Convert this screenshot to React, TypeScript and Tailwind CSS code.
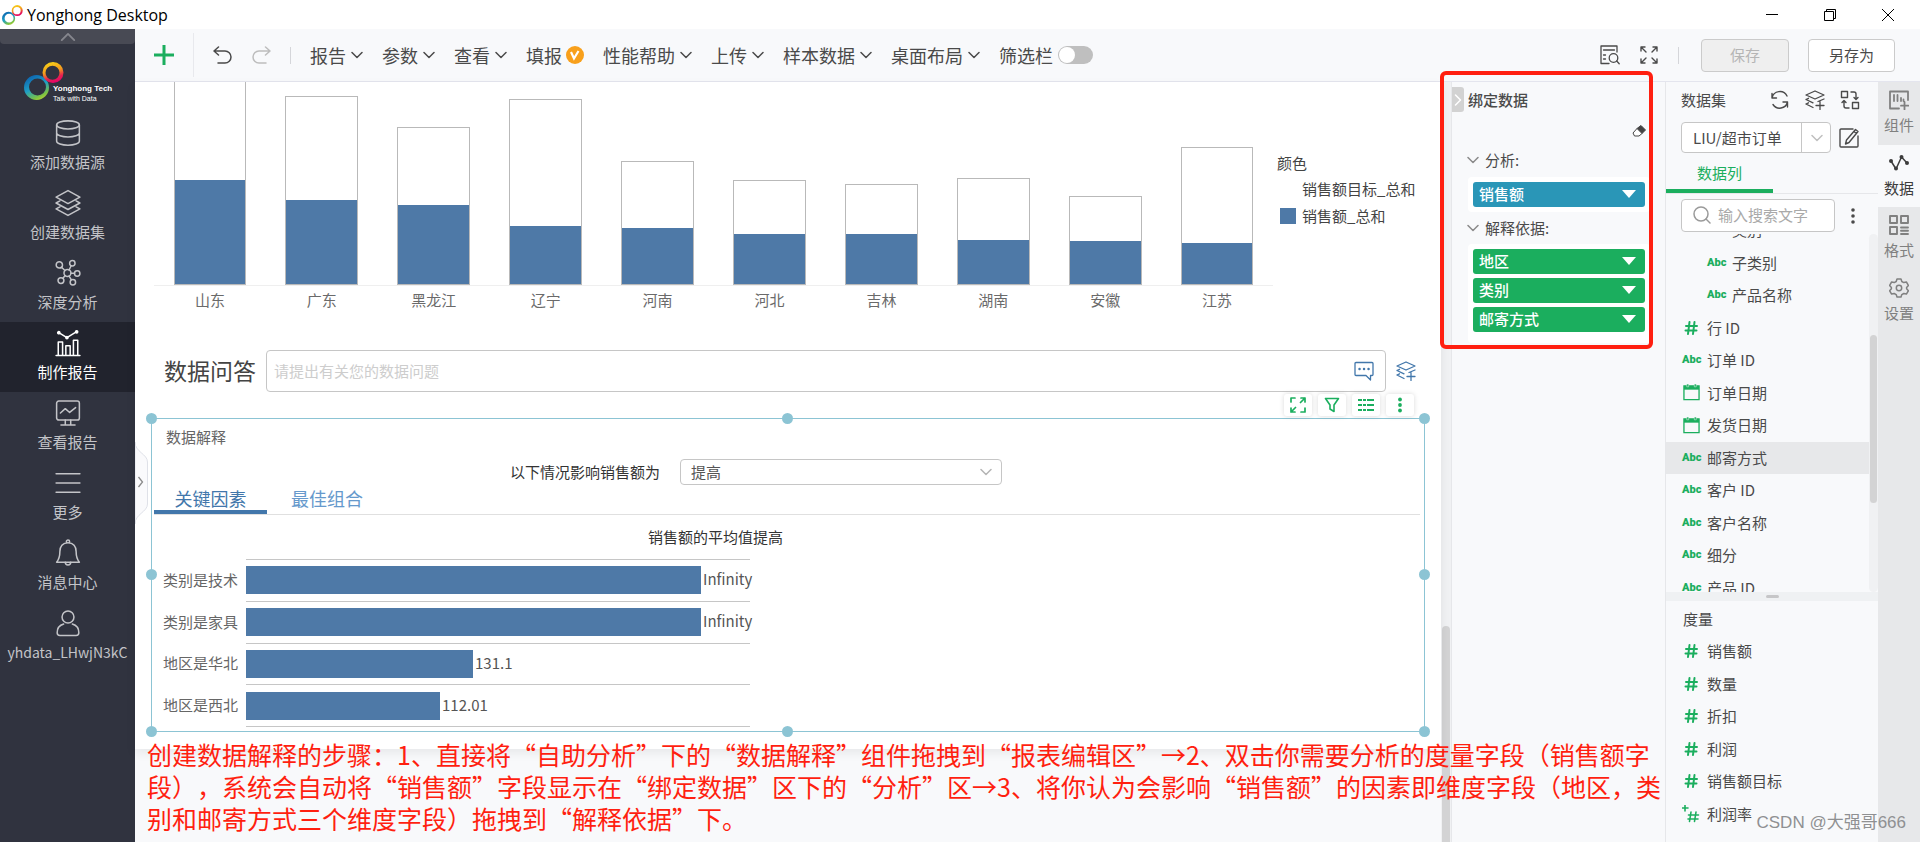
import React from 'react';

const stroke = {
  fill: 'none',
  stroke: 'currentColor',
  strokeWidth: 1.5,
  strokeLinecap: 'round' as const,
  strokeLinejoin: 'round' as const,
};

const Logo = ({ className, id }: { className: string; id: string }) => (
  <svg viewBox="0 0 40 38" className={className} aria-hidden="true">
    <defs>
      <linearGradient id={`${id}-warm`} x1="0.3" y1="0" x2="0.6" y2="1">
        <stop offset="0" stopColor="#f7d417" />
        <stop offset="0.45" stopColor="#f39a1e" />
        <stop offset="0.75" stopColor="#e6204f" />
        <stop offset="1" stopColor="#e5006e" />
      </linearGradient>
      <linearGradient id={`${id}-cool`} x1="0.2" y1="0" x2="0.7" y2="1">
        <stop offset="0" stopColor="#0b5fae" />
        <stop offset="0.5" stopColor="#1f9fc4" />
        <stop offset="0.85" stopColor="#7cc243" />
        <stop offset="1" stopColor="#b5d334" />
      </linearGradient>
    </defs>
    <path
      fill={`url(#${id}-cool)`}
      fillRule="evenodd"
      d="M12.500 13a12.500 12.500 0 1 0 0 25a12.500 12.500 0 0 0 0-25zM13.500 16.500a8.500 8.500 0 1 1 0 17a8.500 8.500 0 0 1 0-17z"
    />
    <path
      fill={`url(#${id}-warm)`}
      fillRule="evenodd"
      d="M29 0a10.500 10.500 0 1 0 0 21a10.500 10.500 0 0 0 0-21zM28.500 3.800a7 7 0 1 1 0 14a7 7 0 0 1 0-14z"
    />
  </svg>
);

const Chevron = ({ className }: { className: string }) => (
  <svg viewBox="0 0 12 8" className={className} {...stroke} aria-hidden="true">
    <path d="M1 1.500l5 5 5-5" />
  </svg>
);

const LayersPlus = ({ className }: { className: string }) => (
  <svg viewBox="0 0 20 20" className={className} {...stroke} strokeWidth={1.3} aria-hidden="true">
    <path d="M10 1L1 5l9 4 9-4zM19 9L13 11.500M1 9.500l7 3.300M1 9.500l2.500-1.200M1 14l7 3.500M1 14l2.500-1.200M15 11.500v8M11 15.500h8" />
  </svg>
);

const navItems = [
  {
    label: '添加数据源',
    icon: (
      <>
        <ellipse cx="12" cy="4.500" rx="10.500" ry="3.700" />
        <path d="M1.500 4.500v15c0 2 4.700 3.700 10.500 3.700s10.500-1.700 10.500-3.700v-15M1.500 12c0 2 4.700 3.700 10.500 3.700s10.500-1.700 10.500-3.700" />
      </>
    ),
  },
  {
    label: '创建数据集',
    icon: (
      <path d="M12 0.500L23 6.500 12 12.500 1 6.500zM4.500 10L1 12l11 6 11-6-3.500-2M4.500 15.500L1 17.500l11 6 11-6-3.500-2" />
    ),
  },
  {
    label: '深度分析',
    icon: (
      <>
        <circle cx="11.500" cy="12" r="3.200" />
        <circle cx="4" cy="4.500" r="2.900" />
        <circle cx="16" cy="3" r="2.500" />
        <circle cx="20.500" cy="12.500" r="2.500" />
        <circle cx="5.500" cy="19" r="2.700" />
        <circle cx="16.500" cy="20.500" r="2.500" />
        <path d="M6 6.700l3.200 3M14.900 5.300l-1.900 3.900M14.700 12.200h3.300M9.400 14.400l-2.100 2.500M13 14.900l2 3.300" />
      </>
    ),
  },
  {
    label: '制作报告',
    icon: (
      <>
        <path d="M1 23.500h22M3 23.500V11h4v12.500M10 23.500V14.500h4v9M17 23.500V9.500h4v14" />
        <path d="M3.500 2.500L11 7l9-5.500" />
        <circle cx="3.500" cy="2.500" r="1" fill="currentColor" />
        <circle cx="11" cy="7" r="1" fill="currentColor" />
        <circle cx="20" cy="1.700" r="1" fill="currentColor" />
      </>
    ),
  },
  {
    label: '查看报告',
    icon: (
      <>
        <rect x="1.500" y="1" width="21" height="17.500" rx="2" />
        <path d="M5 12l4.500-4 4 3.500L19 7M9.500 18.500v4M14.500 18.500v4M5.500 23h13" />
      </>
    ),
  },
  { label: '更多', icon: <path d="M1 3.500h22M1 12h22M1 20.500h22" /> },
  {
    label: '消息中心',
    icon: (
      <>
        <path d="M12 2.500c-5 0-7.500 3.500-7.500 8 0 5.500-1 7.500-3 10h21c-2-2.500-3-4.500-3-10 0-4.500-2.500-8-7.500-8zM10.500 2.500v-1a1.500 1.500 0 0 1 3 0v1" />
        <path d="M9.500 20.500a2.500 2.500 0 0 0 5 0" />
      </>
    ),
  },
  {
    label: 'yhdata_LHwjN3kC',
    small: true,
    icon: (
      <>
        <circle cx="12" cy="6.500" r="5.500" />
        <path d="M8 13c-3.500 1-6 4-6 8 0 1.500 1 2.500 2.500 2.500h15c1.500 0 2.500-1 2.500-2.500 0-4-2.500-7-6-8" />
      </>
    ),
  },
];

const menus = ['报告', '参数', '查看', '填报', '性能帮助', '上传', '样本数据', '桌面布局'];

// total = target bar height, value = filled part
const provinces = [
  { name: '山东', total: 230, value: 105 },
  { name: '广东', total: 189, value: 85 },
  { name: '黑龙江', total: 158, value: 80 },
  { name: '辽宁', total: 186, value: 59 },
  { name: '河南', total: 124, value: 57 },
  { name: '河北', total: 105, value: 51 },
  { name: '吉林', total: 101, value: 51 },
  { name: '湖南', total: 107, value: 45 },
  { name: '安徽', total: 89, value: 44 },
  { name: '江苏', total: 138, value: 42 },
];

const factors = [
  { name: '类别是技术', value: 'Infinity', width: 455 },
  { name: '类别是家具', value: 'Infinity', width: 455 },
  { name: '地区是华北', value: '131.1', width: 227 },
  { name: '地区是西北', value: '112.01', width: 194 },
];

const columns = [
  { name: '类别', kind: 'abc', nested: true },
  { name: '子类别', kind: 'abc', nested: true },
  { name: '产品名称', kind: 'abc', nested: true },
  { name: '行 ID', kind: 'num' },
  { name: '订单 ID', kind: 'abc' },
  { name: '订单日期', kind: 'date' },
  { name: '发货日期', kind: 'date' },
  { name: '邮寄方式', kind: 'abc', active: true },
  { name: '客户 ID', kind: 'abc' },
  { name: '客户名称', kind: 'abc' },
  { name: '细分', kind: 'abc' },
  { name: '产品 ID', kind: 'abc' },
];

const measures = [
  { name: '销售额', kind: 'num' },
  { name: '数量', kind: 'num' },
  { name: '折扣', kind: 'num' },
  { name: '利润', kind: 'num' },
  { name: '销售额目标', kind: 'num' },
  { name: '利润率', kind: 'calc' },
];

const sideTabs = [
  {
    label: '组件',
    icon: (
      <path d="M19 10V1.500H1v17h9M5 5v6M8.500 5v6M12 8v3M14.500 9.500v1.500M15.500 12v7.500M12 15.700h7.500" strokeWidth="1.800" />
    ),
  },
  {
    label: '数据',
    active: true,
    icon: (
      <>
        <path d="M2 8l5 8L12.500 4 18 10" strokeWidth="1.500" />
        <g fill="currentColor" stroke="none">
          <circle cx="2" cy="8" r="2" />
          <circle cx="7" cy="15.500" r="2" />
          <circle cx="12.500" cy="4" r="2" />
          <circle cx="18" cy="10" r="2" />
        </g>
      </>
    ),
  },
  {
    label: '格式',
    icon: (
      <path d="M1 1h7v7H1zM12 1h7v7h-7zM1 12h7v7H1zM12 12.500h7M12 15.800h7M12 19h7" strokeWidth="1.900" />
    ),
  },
  {
    label: '设置',
    icon: (
      <>
        <path d="M8 1h4l.8 2.500 2 1.100 2.600-.6 2 3.400-1.800 2v1.300l1.800 2-2 3.400-2.600-.6-2 1.100L12 19H8l-.8-2.400-2-1.100-2.600.6-2-3.400 1.800-2V9.400l-1.800-2 2-3.400 2.600.6 2-1.100z" />
        <circle cx="10" cy="10" r="2.700" />
      </>
    ),
  },
];

const FieldIcon = ({ kind }: { kind: string }) => {
  if (kind === 'date') {
    return (
      <svg viewBox="0 0 18 18" className="ml-px h-[17px] w-[17px]" aria-hidden="true">
        <path d="M1 2h16v14.500H1z" fill="none" stroke="#1bae5e" strokeWidth="1.400" />
        <path d="M1 2h16v4H1z" fill="#1bae5e" />
        <path d="M4 0h2v3H4zM12 0h2v3h-2z" fill="#1bae5e" stroke="#f8f9fb" strokeWidth="0.500" />
      </svg>
    );
  }
  if (kind === 'abc') {
    return <span className="font-[Roboto] text-[11px] leading-4 font-black text-[#1bae5e]">Abc</span>;
  }
  return (
    <svg viewBox="0 0 18 18" className="h-[18px] w-[18px] text-[#1bae5e]" {...stroke} strokeWidth={2} aria-hidden="true">
      {kind === 'calc' ? (
        <path d="M3 0v6M0 3h6M9 7l-1.500 9.500M14 7l-1.500 9.500M6.500 10h10M6 14h10" strokeWidth="1.600" />
      ) : (
        <path d="M7.500 3L6 15M12.500 3L11 15M4 7h11M3.500 11.500h11" />
      )}
    </svg>
  );
};

const FieldList = ({ fields }: { fields: { name: string; kind: string; nested?: boolean; active?: boolean }[] }) => (
  <>
    {fields.map((f) => (
      <li
        key={f.name}
        className={`flex flex-1 items-center ${f.nested ? 'pl-[41px]' : 'pl-4'} ${f.active ? 'bg-[#e7e8ea]' : ''}`}
      >
        <span className="flex w-[25px] shrink-0 items-center">
          <FieldIcon kind={f.kind} />
        </span>
        {f.name}
      </li>
    ))}
  </>
);

const Pill = ({ label, blue }: { label: string; blue?: boolean }) => (
  <button
    className={`flex h-[25px] w-full items-center justify-between rounded-[3px] pr-[9px] pb-px pl-1.5 text-[15px] leading-[22px] font-medium text-white ${
      blue ? 'bg-[#2a96b7]' : 'bg-[#1bae5e]'
    }`}
  >
    {label}
    <svg viewBox="0 0 14 8" className="h-2 w-3.5" aria-hidden="true">
      <path d="M0 0h14L7 8z" fill="#fff" />
    </svg>
  </button>
);

const Handle = ({ className }: { className: string }) => (
  <span className={`absolute h-[11px] w-[11px] rounded-full bg-[#8cc4d4] ${className}`} />
);

const TitleBar = () => (
  <header className="flex h-[29px] shrink-0 items-center bg-white pr-[26px] pl-0.5 text-black">
    <Logo id="title" className="h-5 w-[21px]" />
    <h1 className="ml-1 font-['Open_Sans','Noto_Sans_CJK_SC',sans-serif] text-base leading-6">Yonghong Desktop</h1>
    <div className="ml-auto flex items-center gap-[46px]">
      <button aria-label="最小化">
        <svg viewBox="0 0 12 12" className="h-3 w-3" stroke="#000" fill="none">
          <path d="M0 5.500h12" />
        </svg>
      </button>
      <button aria-label="还原">
        <svg viewBox="0 0 12 12" className="h-3 w-3" stroke="#000" fill="none">
          <path d="M0.500 2.500h9v9h-9zM2.500 2.500v-2h9v9h-2" />
        </svg>
      </button>
      <button aria-label="关闭">
        <svg viewBox="0 0 12 12" className="h-3 w-3" stroke="#000" fill="none">
          <path d="M0 0l12 12M12 0L0 12" />
        </svg>
      </button>
    </div>
  </header>
);

const Sidebar = () => (
  <aside className="flex w-[135px] shrink-0 flex-col bg-[#30333f]">
    <button className="flex h-[15px] items-center justify-center rounded-b-sm bg-[#484a54] text-[#85868d]" aria-label="收起">
      <Chevron className="h-2.5 w-4 rotate-180" />
    </button>
    <div className="flex h-[68px] items-start pt-[18px] pl-6">
      <Logo id="brand" className="h-[38px] w-10 shrink-0" />
      <div className="-ml-[11px] pt-[21px] font-['Liberation_Sans',sans-serif] whitespace-nowrap text-white">
        <p className="text-[8px] leading-3 font-bold">Yonghong Tech</p>
        <p className="text-[7px] leading-2">Talk with Data</p>
      </div>
    </div>
    <nav>
      {navItems.map((item) => (
        <a
          key={item.label}
          href="#"
          className={`flex h-[70px] flex-col items-center pt-2 ${item.small ? 'text-sm' : 'text-[15px]'} ${
            item.label === '制作报告' ? 'bg-[#21232d] text-white' : 'text-[#c3c4c8]'
          }`}
        >
          <svg viewBox="0 0 24 24" className="h-[26px] w-[26px] overflow-visible" {...stroke} strokeWidth={1.4} aria-hidden="true">
            {item.icon}
          </svg>
          <span className="mt-1 leading-6">{item.label}</span>
        </a>
      ))}
    </nav>
  </aside>
);

const Toolbar = () => (
  <div className="flex h-[53px] shrink-0 items-center border-b border-[#e4e5ee] bg-[#f8f9fb] text-lg leading-6 text-[#4a4a4a]">
    <button className="ml-[19px] text-[#1bae5e]" aria-label="新建">
      <svg viewBox="0 0 20 20" className="h-5 w-5" stroke="currentColor" strokeWidth="3">
        <path d="M10 0v20M0 10h20" />
      </svg>
    </button>
    <span className="mr-[19px] ml-[19px] h-11 w-px bg-[#e8e9ed]" />
    <button aria-label="撤销">
      <svg viewBox="0 0 20 18" className="h-[18px] w-5" {...stroke} strokeWidth={1.5}>
        <path d="M5.500 1L1 5l4.500 4M1.500 5H12a6 6 0 0 1 0 12H5" />
      </svg>
    </button>
    <button className="ml-[18px] text-[#bdbdbd]" aria-label="重做">
      <svg viewBox="0 0 20 18" className="h-[18px] w-5" {...stroke} strokeWidth={1.5}>
        <path d="M14.500 1L19 5l-4.500 4M18.500 5H8a6 6 0 0 0 0 12h7" />
      </svg>
    </button>
    <span className="mr-[19px] ml-[19px] h-[17px] w-px bg-[#d5d6da]" />
    {menus.map((m) => (
      <button key={m} className="mr-[19px] flex shrink-0 items-center gap-[5px]">
        {m}
        {m === '填报' ? (
          <svg viewBox="0 0 18 18" className="-ml-px h-[18px] w-[18px]" aria-hidden="true">
            <circle cx="9" cy="9" r="9" fill="#f8a01c" />
            <path d="M5 6l3 6.500L12.500 5" fill="none" stroke="#fff" strokeWidth="2.200" />
          </svg>
        ) : (
          <Chevron className="h-2 w-3" />
        )}
      </button>
    ))}
    <label className="flex shrink-0 items-center gap-[5px]">
      筛选栏
      <input
        type="checkbox"
        className="h-[18px] w-[35px] appearance-none rounded-full bg-[#bfbfbf] p-px before:block before:h-4 before:w-4 before:rounded-full before:bg-white before:content-['']"
      />
    </label>
    <div className="ml-auto flex shrink-0 items-center pr-[25px] text-[15px]">
      <button aria-label="查找">
        <svg viewBox="0 0 20 20" className="h-5 w-5" {...stroke} strokeWidth={1.3}>
          <path d="M17 7V1H1v17.500h8M3.500 5h11M3.500 10h2M3.500 14h2" />
          <circle cx="13.500" cy="13" r="4.300" />
          <path d="M16.700 16l2.500 2.800" />
        </svg>
      </button>
      <button className="ml-5" aria-label="全屏">
        <svg viewBox="0 0 18 18" className="h-[18px] w-[18px]" {...stroke} strokeWidth={1.4}>
          <path d="M1 5V1h4M1 1l5 5M13 1h4v4M17 1l-5 5M1 13v4h4M1 17l5-5M13 17h4v-4M17 17l-5-5" />
        </svg>
      </button>
      <span className="mr-[22px] ml-5 h-[17px] w-px bg-[#d5d6da]" />
      <button disabled className="h-[33px] w-[88px] rounded-sm border border-[#cbcbcb] bg-[#efefef] text-[#b5b5b5]">
        保存
      </button>
      <button className="ml-[19px] h-[33px] w-[87px] rounded-sm border border-[#cbcbcb] bg-white">另存为</button>
    </div>
  </div>
);

const SalesChart = () => (
  <div className="flex pl-[19px]">
    <div className="flex-1">
      <div className="flex h-[204px] items-end overflow-hidden border-b border-[#efefef]">
        {provinces.map((p) => (
          <div key={p.name} className="flex flex-1 items-end justify-center">
            <div className="flex w-[65%] shrink-0 items-end border border-[#b9b9b9] bg-white" style={{ height: p.total }}>
              <div className="w-full bg-[#4e79a7]" style={{ height: p.value - 1 }} />
            </div>
          </div>
        ))}
      </div>
      <div className="flex pt-[3px]">
        {provinces.map((p) => (
          <span key={p.name} className="flex-1 text-center leading-[22px] text-[#6a6a6a]">
            {p.name}
          </span>
        ))}
      </div>
    </div>
    <div className="w-[168px] shrink-0 pt-[70px] pl-1 leading-[22px] text-[#444]">
      <p>颜色</p>
      <p className="mt-1 pl-[25px]">销售额目标_总和</p>
      <p className="mt-[5px] flex items-center gap-1.5 pl-[3px]">
        <span className="h-4 w-4 bg-[#4e79a7]" />
        销售额_总和
      </p>
    </div>
  </div>
);

const floatButton = 'flex h-[22px] w-7 items-center justify-center rounded-[3px] bg-white shadow-[0_0_5px_rgba(0,0,0,0.15)]';

const ExplainPanel = () => (
  <section className="relative mx-4 mt-[26px] h-[314px] border border-[#8cc4d4] bg-white">
    <div className="absolute -top-[25px] right-2.5 flex gap-1.5 text-[#1bae5e]">
      <button className={floatButton} aria-label="放大">
        <svg viewBox="0 0 16 16" className="h-4 w-4" {...stroke} strokeWidth={1.7}>
          <path d="M1 5V1h4M11 1h4v4M15 1l-4.500 4.500M1 11v4h4M1 15l4.500-4.500M11 15h4v-4" />
        </svg>
      </button>
      <button className={floatButton} aria-label="筛选">
        <svg viewBox="0 0 16 16" className="h-4 w-4" {...stroke} strokeWidth={1.6}>
          <path d="M1.500 1.500h13L10 8v6.500L6 12V8z" />
        </svg>
      </button>
      <button className={floatButton} aria-label="列表">
        <svg viewBox="0 0 16 16" className="h-4 w-4" stroke="currentColor" strokeWidth="1.800">
          <path d="M0 3h4M5 3h3M9 3h7M0 8h4M5 8h3M9 8h7M0 13h4M5 13h3M9 13h7" />
        </svg>
      </button>
      <button className={floatButton} aria-label="更多">
        <svg viewBox="0 0 16 16" className="h-4 w-4" fill="currentColor">
          <circle cx="8" cy="2.500" r="1.900" />
          <circle cx="8" cy="8" r="1.900" />
          <circle cx="8" cy="13.500" r="1.900" />
        </svg>
      </button>
    </div>

    <h2 className="pt-[7px] pl-3.5 leading-[22px] text-[#666]">数据解释</h2>

    <div className="mt-[11px] flex items-center pl-[358px]">
      <label htmlFor="effect" className="leading-[22px] text-[#333]">
        以下情况影响销售额为
      </label>
      <div className="relative ml-5 w-[322px]">
        <select
          id="effect"
          className="h-[26px] w-full appearance-none rounded-sm border border-[#c6c6c6] bg-white pl-2.5 leading-[22px] text-[#555]"
        >
          <option>提高</option>
        </select>
        <Chevron className="pointer-events-none absolute top-[9px] right-[10px] h-2 w-3 text-[#b5b5b5]" />
      </div>
    </div>

    <div className="mr-1 ml-0.5 flex h-[30px] border-b border-[#e0e0e0] text-lg leading-6">
      <button className="w-[113px] border-b-4 border-[#4277ab] text-[#4277ab]">关键因素</button>
      <button className="ml-6 pb-1 text-[#6699cc]">最佳组合</button>
    </div>

    <h3 className="mt-[11px] pl-[496px] leading-[22px] text-[#333]">销售额的平均值提高</h3>

    <div className="mt-[11px] flex h-[168px] flex-col">
      {factors.map((f) => (
        <div key={f.name} className="flex flex-1 items-center pl-[11px]">
          <span className="w-[76px] leading-[22px] text-[#666]">{f.name}</span>
          <div className="ml-[7px] flex w-[504px] items-center self-stretch border-t border-[#c6c6c6]">
            <div className="h-[28px] shrink-0 bg-[#4e79a7]" style={{ width: f.width }} />
            <span className="ml-0.5 pb-0.5 leading-[22px] text-[#555]">{f.value}</span>
          </div>
        </div>
      ))}
      <div className="ml-[94px] h-px w-[504px] shrink-0 bg-[#c6c6c6]" />
    </div>

    <Handle className="-top-1.5 -left-1.5" />
    <Handle className="-top-1.5 left-1/2 -ml-1.5" />
    <Handle className="-top-1.5 -right-1.5" />
    <Handle className="top-1/2 -left-1.5 -mt-1.5" />
    <Handle className="top-1/2 -right-1.5 -mt-1.5" />
    <Handle className="-bottom-1.5 -left-1.5" />
    <Handle className="-bottom-1.5 left-1/2 -ml-1.5" />
    <Handle className="-right-1.5 -bottom-1.5" />
  </section>
);

const Canvas = () => (
  <main className="relative min-w-0 flex-1 bg-[#f8f9fb]">
    <div className="bg-white pb-[17px] shadow-[0_4px_10px_rgba(0,0,0,0.07)]">
      <SalesChart />
      <div className="mt-[39px] flex items-center gap-[10px] pr-[25px] pl-[29px]">
        <label htmlFor="question" className="shrink-0 pb-0.5 text-[23px] leading-8 text-[#444]">
          数据问答
        </label>
        <div className="flex h-[42px] flex-1 items-center rounded-sm border border-[#c6c6c6] pr-[11px] pl-[7px]">
          <input
            id="question"
            placeholder="请提出有关您的数据问题"
            className="flex-1 leading-[22px] outline-none placeholder:text-[#cdcdcd]"
          />
          <svg viewBox="0 0 20 20" className="h-5 w-5 text-[#4277ab]" {...stroke} strokeWidth={1.3} aria-hidden="true">
            <path d="M2 1.500h16a1 1 0 0 1 1 1v11a1 1 0 0 1-1 1h-1.500V19L12 14.500H2a1 1 0 0 1-1-1v-11a1 1 0 0 1 1-1z" />
            <path d="M5.500 8h.1M10 8h.1M14.500 8h.1" strokeWidth="2.400" />
          </svg>
        </div>
        <button className="text-[#4277ab]" aria-label="选择数据集">
          <LayersPlus className="h-5 w-5" />
        </button>
      </div>
      <ExplainPanel />
    </div>

    {/* drawer handle on the left edge */}
    <button className="absolute top-[360px] left-0" aria-label="展开">
      <svg viewBox="0 0 13 82" className="h-[82px] w-[13px]" fill="none">
        <path d="M0 0c0 10 12.500 12 12.500 20v42C12.500 70 0 72 0 82z" fill="#fafafc" stroke="#dfe1e8" />
        <path d="M3.500 35l4 5-4 5" stroke="#8a8a8a" strokeWidth="1.300" />
      </svg>
    </button>
  </main>
);

const BindPanel = () => (
  <aside className="relative w-[214px] shrink-0 border-l border-[#e6e7ea] bg-[#f8f9fb] pr-[15px]">
    <div className="flex items-start pt-[5px]">
      <button className="flex h-[25px] w-3 items-center justify-center rounded-r-[3px] bg-[#d2d2d2] text-white" aria-label="收起">
        <Chevron className="h-2 w-3 shrink-0 -rotate-90" />
      </button>
      <h2 className="ml-1 pt-0.5 leading-[22px] font-medium">绑定数据</h2>
    </div>
    <div className="flex h-[37px] items-center justify-end pr-1">
      <svg viewBox="0 0 14 12" className="h-3 w-3.5" aria-hidden="true">
        <path d="M9 0.500l4.500 4.500-3.500 3.500L5 3.500z" fill="#444" stroke="#444" />
        <path d="M5 3.500L1 8l1.500 3h4.500l3-2.500z" fill="#fff" stroke="#444" />
      </svg>
    </div>
    <h3 className="flex items-center gap-1.5 pl-[15px] leading-[22px]">
      <Chevron className="h-2 w-3 text-[#8a8a8a]" />
      分析:
    </h3>
    <div className="mt-1.5 ml-4 rounded-sm bg-white px-[5px] py-[5px]">
      <Pill label="销售额" blue />
    </div>
    <h3 className="mt-[5px] flex items-center gap-1.5 pl-[15px] leading-[22px]">
      <Chevron className="h-2 w-3 text-[#8a8a8a]" />
      解释依据:
    </h3>
    <div className="mt-[5px] ml-4 flex flex-col gap-1 rounded-sm bg-white px-[5px] pt-[5px] pb-[11px]">
      <Pill label="地区" />
      <Pill label="类别" />
      <Pill label="邮寄方式" />
    </div>

    {/* highlight frame */}
    <div className="pointer-events-none absolute -top-[11px] -left-3 z-10 h-[278px] w-[213px] rounded-md border-4 border-[#ff1f10]" />
  </aside>
);

const DataPanel = () => (
  <aside className="flex w-[213px] shrink-0 flex-col border-l border-[#e6e7ea] bg-[#f8f9fb]">
    <div className="flex items-center pt-[7px] pr-[18px] pl-[15px]">
      <h2 className="leading-[22px]">数据集</h2>
      <div className="ml-auto flex gap-[15px]">
        <button aria-label="刷新">
          <svg viewBox="0 0 20 20" className="h-5 w-5" {...stroke} strokeWidth={1.4}>
            <path d="M2 8a8 8 0 0 1 15-2M17.500 12a8 8 0 0 1-14.500 2.500M2 3.500V8h4.500M17.500 17v-5H13" />
          </svg>
        </button>
        <button aria-label="新建数据集">
          <LayersPlus className="h-5 w-5" />
        </button>
        <button aria-label="替换">
          <svg viewBox="0 0 20 20" className="h-5 w-5" {...stroke} strokeWidth={1.4}>
            <path d="M1.500 1.500h6v6h-6zM12.500 12.500h6v6h-6zM11 2h3a2 2 0 0 1 2 2v5M14 7.500l2 2 2-2M9 18H6a2 2 0 0 1-2-2v-5M2 12.500l2-2 2 2" />
          </svg>
        </button>
      </div>
    </div>
    <div className="flex items-center gap-2 pt-[11px] pl-[15px]">
      <div className="relative w-[150px]">
        <select
          aria-label="数据集"
          className="h-[31px] w-full appearance-none rounded-sm border border-[#c6c6c6] bg-white pl-[11px] leading-[22px]"
        >
          <option>LIU/超市订单</option>
        </select>
        <span className="pointer-events-none absolute top-0 right-0 flex h-[31px] w-[30px] items-center justify-center border-l border-[#c6c6c6] text-[#c0c0c0]">
          <Chevron className="h-2 w-3" />
        </span>
      </div>
      <button aria-label="编辑">
        <svg viewBox="0 0 20 20" className="h-5 w-5" {...stroke} strokeWidth={1.4}>
          <path d="M14 1H2a1 1 0 0 0-1 1v16a1 1 0 0 0 1 1h16a1 1 0 0 0 1-1V8M16.500 1.500l2.500 2-9 11-3.500 1.500 1-4zM15 3.500l2.300 2" />
        </svg>
      </button>
    </div>
    <div className="mt-[7px] flex h-[34px] border-b border-[#e6e7ea]">
      <button className="w-[107px] border-b-4 border-[#1bae5e] pb-1 leading-[22px] text-[#1bae5e]">数据列</button>
    </div>
    <div className="flex items-center pt-[5px] pl-[15px]">
      <div className="flex h-[33px] w-[154px] items-center gap-[7px] rounded-sm border border-[#c6c6c6] bg-white pb-0.5 pl-[11px]">
        <svg viewBox="0 0 18 18" className="h-[18px] w-[18px] shrink-0 text-[#9a9a9a]" {...stroke} aria-hidden="true">
          <circle cx="8" cy="8" r="7" />
          <path d="M13 13l4 4" />
        </svg>
        <input
          aria-label="搜索"
          placeholder="输入搜索文字"
          className="w-full min-w-0 leading-[22px] outline-none placeholder:text-[#a9a9a9]"
        />
      </div>
      <button className="ml-4" aria-label="更多">
        <svg viewBox="0 0 4 16" className="h-4 w-1" fill="currentColor">
          <circle cx="2" cy="2" r="1.800" />
          <circle cx="2" cy="8" r="1.800" />
          <circle cx="2" cy="14" r="1.800" />
        </svg>
      </button>
    </div>
    <div className="mt-0.5 flex h-[358px] shrink-0 overflow-hidden leading-[22px]">
      <ul className="-mt-5 flex h-[390px] flex-1 flex-col">
        <FieldList fields={columns} />
      </ul>
      <div className="w-[9px] rounded-full bg-[#f0f1f3] px-px pt-[101px]">
        <div className="h-[168px] rounded-full bg-[#d3d3d4]" />
      </div>
    </div>
    <div className="flex h-[9px] shrink-0 items-center justify-center bg-[#eff1f3]">
      <span className="h-[3px] w-[13px] rounded-sm bg-[#c6c6c8]" />
    </div>
    <h3 className="mt-[7px] pl-[17px] leading-[22px]">度量</h3>
    <ul className="mt-[5px] flex h-[195px] flex-col leading-[22px]">
      <FieldList fields={measures} />
    </ul>
  </aside>
);

const SideTabs = () => (
  <nav className="w-[42px] shrink-0 bg-[#e7e8ea]">
    <div className="flex h-[250px] flex-col">
      {sideTabs.map((t) => (
        <a
          key={t.label}
          href="#"
          className={`flex flex-1 flex-col items-center pt-2 ${t.active ? 'bg-[#f8f9fb] text-[#3c3c3c]' : 'text-[#808080]'}`}
        >
          <svg viewBox="0 0 20 20" className="h-5 w-5" {...stroke}>
            {t.icon}
          </svg>
          <span className="mt-1 leading-[22px]">{t.label}</span>
        </a>
      ))}
    </div>
  </nav>
);

const App = () => {
  return (
    <div className="relative flex h-screen flex-col overflow-hidden bg-[#f8f9fb] font-['Noto_Sans_CJK_SC',sans-serif] text-[15px] text-[#4a4a4a]">
      <TitleBar />
      <div className="flex min-h-0 flex-1">
        <Sidebar />
        <div className="flex min-w-0 flex-1 flex-col">
          <Toolbar />
          <div className="flex min-h-0 flex-1">
            <Canvas />
            <div className="w-[10px] shrink-0 bg-[#f0f1f3] px-px pt-[544px]">
              <div className="h-full rounded-t-full bg-[#d3d3d4]" />
            </div>
            <BindPanel />
            <DataPanel />
            <SideTabs />
          </div>
        </div>
      </div>

      {/* step notes over the workspace */}
      <p className="absolute top-[738px] left-[147px] z-20 text-[25px] leading-8 whitespace-nowrap text-[#ff1f10] [text-spacing-trim:space-all]">
        创建数据解释的步骤：1、直接将“自助分析”下的“数据解释”组件拖拽到“报表编辑区”→2、双击你需要分析的度量字段（销售额字
        <br />
        段），系统会自动将“销售额”字段显示在“绑定数据”区下的“分析”区→3、将你认为会影响“销售额”的因素即维度字段（地区，类
        <br />
        别和邮寄方式三个维度字段）拖拽到“解释依据”下。
      </p>

      <p className="absolute right-3.5 bottom-1 z-20 font-['Liberation_Sans','Noto_Sans_CJK_SC',sans-serif] text-[17px] leading-[30px] text-[#8f9092]">
        CSDN @大强哥666
      </p>
    </div>
  );
};

export default App;
